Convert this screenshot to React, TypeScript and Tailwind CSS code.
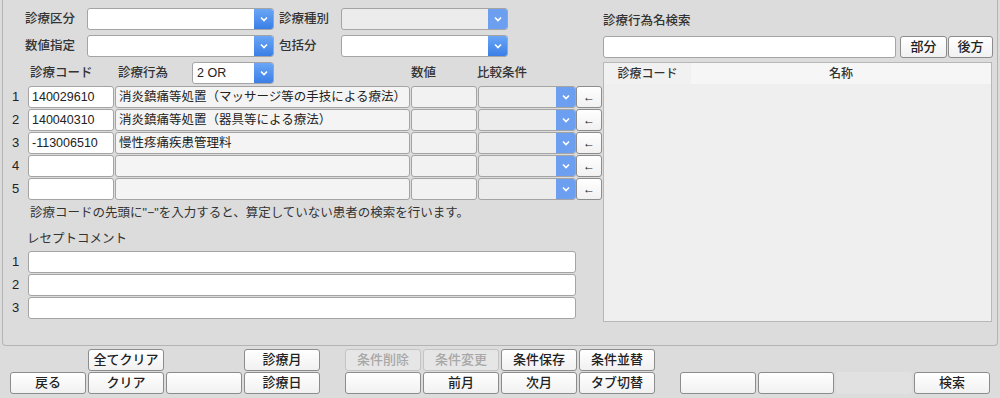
import React from "react";

const font = "font-['Liberation_Sans','Noto_Sans_CJK_JP',sans-serif]";

function Chevron() {
  return (
    <svg width="8" height="6" viewBox="0 0 8 6" className="block">
      <polyline points="1,1.5 4,4.5 7,1.5" fill="none" stroke="white" strokeWidth="1.6" />
    </svg>
  );
}

function Combo({
  w,
  value = "",
  disabled = false,
  soft = false,
}: {
  w: string;
  value?: string;
  disabled?: boolean;
  soft?: boolean;
}) {
  return (
    <div
      className={`flex h-[22px] shrink-0 overflow-hidden rounded-[3px] border border-[#a4a4a4] ${w} ${
        disabled ? "bg-[#ececec]" : "bg-white"
      }`}
    >
      <div className="flex-1 truncate px-[4px] leading-[20px] text-[#222]">{value}</div>
      <div
        className={`flex w-[19px] items-center justify-center ${
          soft ? "bg-[#6d9ff0]" : "bg-gradient-to-b from-[#6aa6f6] to-[#3b7fe6]"
        }`}
      >
        <Chevron />
      </div>
    </div>
  );
}

function Field({ w, value = "", bg = "bg-white" }: { w: string; value?: string; bg?: string }) {
  return (
    <div
      className={`h-[22px] shrink-0 overflow-hidden whitespace-nowrap rounded-[3px] border border-[#a4a4a4] px-[3px] leading-[20px] text-[#222] ${w} ${bg}`}
    >
      {value}
    </div>
  );
}

function Btn({ label = "", disabled = false, flat = false }: { label?: string; disabled?: boolean; flat?: boolean }) {
  if (flat) return <div className="h-[22px] w-[76px] rounded-[3px] bg-[#e1e1e1]" />;
  return (
    <div
      className={`flex h-[22px] w-[76px] items-center justify-center rounded-[3px] border text-[13px] font-medium ${
        disabled
          ? "border-[#c4c4c4] bg-[#e6e6e6] text-[#a8a8a8]"
          : "border-[#8c8c8c] bg-gradient-to-b from-white to-[#f1f1f1] text-[#222]"
      }`}
    >
      {label}
    </div>
  );
}

function Empty() {
  return <div className="h-[22px] w-[76px]" />;
}

const rows = [
  { code: "140029610", name: "消炎鎮痛等処置（マッサージ等の手技による療法）" },
  { code: "140040310", name: "消炎鎮痛等処置（器具等による療法）" },
  { code: "-113006510", name: "慢性疼痛疾患管理料" },
  { code: "", name: "" },
  { code: "", name: "" },
];

export default function App() {
  return (
    <div className={`h-[398px] w-[1000px] overflow-hidden bg-[#dcdcdc] text-[12.5px] text-[#333] ${font}`}>
      <div className="ml-[2px] flex h-[346px] w-[996px] rounded-b-[4px] border border-t-0 border-[#b4b4b4]">
        {/* left column */}
        <div className="w-[600px] shrink-0 pt-[8px]">
          <div className="flex items-center">
            <div className="w-[84px] pl-[22px] font-medium">診療区分</div>
            <Combo w="w-[187px]" />
            <div className="w-[67px] pl-[5px] font-medium">診療種別</div>
            <Combo w="w-[167px]" disabled soft />
          </div>
          <div className="mt-[5px] flex items-center">
            <div className="w-[84px] pl-[22px] font-medium">数値指定</div>
            <Combo w="w-[187px]" />
            <div className="w-[67px] pl-[5px] font-medium">包括分</div>
            <Combo w="w-[167px]" />
          </div>
          <div className="mt-[5px] flex h-[22px] items-center">
            <div className="w-[115px] pl-[27px] font-medium">診療コード</div>
            <div className="w-[74px] font-medium">診療行為</div>
            <Combo w="w-[82px]" value="2 OR" />
            <div className="w-[67px]" />
            <div className="ml-[70px] w-[66px] font-medium">数値</div>
            <div className="font-medium">比較条件</div>
          </div>
          <div className="mt-[2px] flex flex-col gap-[1px]">
            {rows.map((r, i) => (
              <div key={i} className="flex items-center gap-[1px]">
                <div className="w-[24px] pl-[9px] text-[13px] text-[#222]">{i + 1}</div>
                <Field w="w-[86px]" value={r.code} />
                <Field w="w-[295px]" value={r.name} bg="bg-[#f4f4f4]" />
                <Field w="w-[66px]" bg="bg-[#f2f2f2]" />
                <div className="flex">
                  <Combo w="w-[98px]" disabled soft />
                  <div className="flex h-[22px] w-[26px] items-center justify-center rounded-[3px] border border-[#8c8c8c] bg-gradient-to-b from-white to-[#f1f1f1] text-[12px] text-[#222]">
                    ←
                  </div>
                </div>
              </div>
            ))}
          </div>
          <div className="mt-[4px] pl-[27px] leading-[18px]">
            診療コードの先頭に"−"を入力すると、算定していない患者の検索を行います。
          </div>
          <div className="mt-[8px] pl-[24px] leading-[18px]">レセプトコメント</div>
          <div className="mt-[3px] flex flex-col gap-[1px]">
            {[1, 2, 3].map((n) => (
              <div key={n} className="flex items-center">
                <div className="w-[25px] pl-[9px] text-[13px] text-[#222]">{n}</div>
                <Field w="w-[548px]" />
              </div>
            ))}
          </div>
        </div>

        {/* right column */}
        <div className="w-[390px] shrink-0 pt-[12px]">
          <div className="font-medium leading-[18px]">診療行為名検索</div>
          <div className="mt-[6px] flex gap-[3px]">
            <Field w="w-[293px]" />
            <div className="ml-[1px] flex h-[22px] w-[47px] items-center justify-center rounded-[3px] border border-[#8c8c8c] bg-gradient-to-b from-white to-[#f1f1f1] text-[13px] font-medium text-[#222]">
              部分
            </div>
            <div className="-ml-[2px] flex h-[22px] w-[45px] items-center justify-center rounded-[3px] border border-[#8c8c8c] bg-gradient-to-b from-white to-[#f1f1f1] text-[13px] font-medium text-[#222]">
              後方
            </div>
          </div>
          <div className="mt-[4px] h-[260px] w-[389px] overflow-hidden border border-[#b8b8b8] bg-[#efefef]">
            <div className="flex h-[21px] items-center text-[12px] font-medium">
              <div className="flex h-full w-[87px] items-center justify-center bg-[#f1f1f1]">診療コード</div>
              <div className="flex h-full flex-1 items-center justify-center bg-[#f6f6f6]">名称</div>
            </div>
          </div>
        </div>
      </div>

      {/* bottom buttons */}
      <div className="mt-[3px] flex gap-[25px] pl-[10px]">
        <div className="flex flex-col gap-[1px]">
          <div className="flex gap-[2px]">
            <Empty />
            <Btn label="全てクリア" />
            <Empty />
            <Btn label="診療月" />
          </div>
          <div className="flex gap-[2px]">
            <Btn label="戻る" />
            <Btn label="クリア" />
            <Btn />
            <Btn label="診療日" />
          </div>
        </div>
        <div className="flex flex-col gap-[1px]">
          <div className="flex gap-[2px]">
            <Btn label="条件削除" disabled />
            <Btn label="条件変更" disabled />
            <Btn label="条件保存" />
            <Btn label="条件並替" />
          </div>
          <div className="flex gap-[2px]">
            <Btn />
            <Btn label="前月" />
            <Btn label="次月" />
            <Btn label="タブ切替" />
          </div>
        </div>
        <div className="flex flex-col gap-[1px]">
          <Empty />
          <div className="flex gap-[2px]">
            <Btn />
            <Btn />
            <Btn flat />
            <Btn label="検索" />
          </div>
        </div>
      </div>
    </div>
  );
}
